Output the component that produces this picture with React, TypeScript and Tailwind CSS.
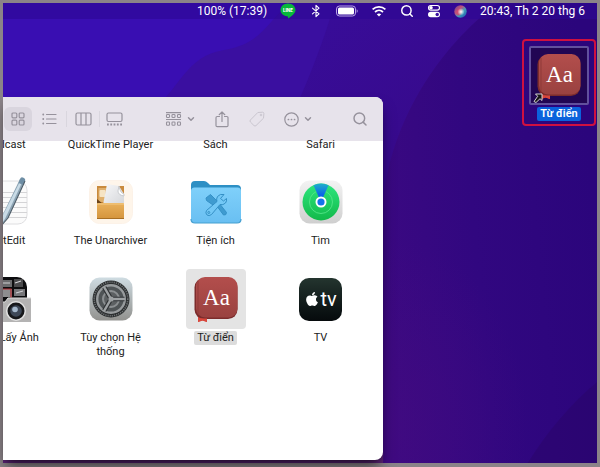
import React from 'react';
import clsx from 'clsx';
import { FaApple } from 'react-icons/fa';
import { ChevronDown, Search } from 'lucide-react';

interface AppItem {
  name: string;
  icon?: React.FC;
  selected?: boolean;
}

const Wallpaper = () => (
  <svg className="absolute inset-0 -z-10 h-full w-full" viewBox="0 0 600 467" preserveAspectRatio="none" aria-hidden="true">
    <defs>
      <linearGradient id="wpBase" x1="0" y1="0" x2="1" y2="1">
        <stop offset="0" stopColor="#390fa8" />
        <stop offset="0.5" stopColor="#370a8c" />
        <stop offset="1" stopColor="#2a046c" />
      </linearGradient>
      <linearGradient id="wpRight" x1="0" y1="0.7" x2="1" y2="0.5">
        <stop offset="0" stopColor="#3b0982" />
        <stop offset="0.45" stopColor="#310780" />
        <stop offset="1" stopColor="#2b057c" />
      </linearGradient>
      <radialGradient id="wpGlow">
        <stop offset="0" stopColor="#420b80" />
        <stop offset="1" stopColor="#420b80" stopOpacity="0" />
      </radialGradient>
    </defs>
    <rect width="600" height="467" fill="url(#wpBase)" />
    <path d="M0 0H335C325 35 312 70 294 110H0Z" fill="#3a0fa0" />
    <path d="M0 0H290C265 20 262 42 222 48C185 54 178 88 148 112H0Z" fill="#390eb2" />
    <path d="M500 0C440 45 392 120 384 200V467H600V0Z" fill="url(#wpRight)" />
    <ellipse cx="390" cy="430" rx="140" ry="190" fill="url(#wpGlow)" opacity="0.7" />
    <path d="M600 385C575 405 550 435 530 467H600Z" fill="#27055f" opacity="0.35" />
    <rect y="455" width="384" height="12" fill="#5d2478" />
  </svg>
);

const LineIcon = () => (
  <svg width="16" height="16" viewBox="0 0 16 16">
    <path d="M8 .5C12.2.5 15.500 3.300 15.500 7C15.500 10.300 11.500 13.300 8 15.500C8.300 14 8 13.400 7 13.300C3.300 12.900.5 10.300.5 7C.5 3.300 3.800.5 8 .5Z" fill="#08b83a" />
    <text x="8" y="8.500" textAnchor="middle" fontSize="4.500" fontWeight="800" fill="#fff" fontFamily="Inter, sans-serif">LINE</text>
  </svg>
);

const BluetoothIcon = () => (
  <svg width="14" height="14" viewBox="0 0 14 14" fill="none" stroke="#fff" strokeWidth="1.100" strokeLinejoin="round" strokeLinecap="round">
    <path d="M3.500 4.200L10 9.800L7 12.700V1.300L10 4.200L3.500 9.800" />
  </svg>
);

const BatteryIcon = () => (
  <svg width="22" height="12" viewBox="0 0 22 12">
    <rect x=".5" y="1" width="19" height="10" rx="3" fill="none" stroke="#b9a5e6" />
    <rect x="2" y="2.500" width="16" height="7" rx="1.500" fill="#fff" />
    <path d="M20.700 4.200C22 4.700 22 7.300 20.700 7.800Z" fill="#b9a5e6" />
  </svg>
);

const WifiIcon = () => (
  <svg width="16" height="12" viewBox="0 0 16 12" fill="none" stroke="#fff" strokeWidth="1.700">
    <path d="M1.600 4.400C5.200.9 10.800.9 14.400 4.400" />
    <path d="M4 7C6.300 4.900 9.700 4.900 12 7" />
    <path d="M8 11.500L5.800 9.200C7.100 8.200 8.900 8.200 10.200 9.200Z" fill="#fff" stroke="none" />
  </svg>
);

const ControlCenterIcon = () => (
  <svg width="14" height="14" viewBox="0 0 14 14">
    <rect x="1.500" y="1.500" width="11" height="4.600" rx="2.300" fill="none" stroke="#fff" strokeWidth="1.100" />
    <circle cx="4" cy="3.800" r="1.800" fill="#fff" />
    <rect x="1" y="7.700" width="12" height="5.500" rx="2.750" fill="#fff" />
    <circle cx="10.200" cy="10.450" r="1.700" fill="#3a10a0" />
  </svg>
);

const SiriIcon = () => (
  <svg width="13" height="13" viewBox="0 0 13 13">
    <defs>
      <radialGradient id="siriCore">
        <stop offset="0" stopColor="#fff" />
        <stop offset="1" stopColor="#fff" stopOpacity="0" />
      </radialGradient>
      <linearGradient id="siriRing" x1="0" y1="0" x2="1" y2="1">
        <stop offset="0" stopColor="#5c4b8e" />
        <stop offset="0.35" stopColor="#c14f7c" />
        <stop offset="0.6" stopColor="#3f9fb8" />
        <stop offset="1" stopColor="#1d4fb0" />
      </linearGradient>
    </defs>
    <circle cx="6.500" cy="6.500" r="6.200" fill="url(#siriRing)" />
    <path d="M2 8.500C3 3.500 7 3 8 6.500C7 11 4 12 2 8.500Z" fill="#e04668" opacity="0.7" />
    <circle cx="7" cy="6.800" r="3.600" fill="url(#siriCore)" />
  </svg>
);

const GridIcon = () => (
  <svg width="14" height="14" viewBox="0 0 14 14" fill="none" stroke="currentColor" strokeWidth="1.200">
    <rect x="1" y="1" width="4.800" height="4.800" rx="1" />
    <rect x="8.200" y="1" width="4.800" height="4.800" rx="1" />
    <rect x="1" y="8.200" width="4.800" height="4.800" rx="1" />
    <rect x="8.200" y="8.200" width="4.800" height="4.800" rx="1" />
  </svg>
);

const ListIcon = () => (
  <svg width="15" height="12" viewBox="0 0 15 12" fill="none" stroke="currentColor" strokeWidth="1.200" strokeLinecap="round">
    <path d="M4.500 1.500H14M4.500 6H14M4.500 10.500H14" />
    <path d="M1.200 1.500H1.300M1.200 6H1.300M1.200 10.500H1.300" strokeWidth="1.800" />
  </svg>
);

const ColumnsIcon = () => (
  <svg width="17" height="14" viewBox="0 0 17 14" fill="none" stroke="currentColor" strokeWidth="1.200">
    <rect x="1" y="1" width="15" height="12" rx="1.500" />
    <path d="M6 1V13M11 1V13" />
  </svg>
);

const GalleryIcon = () => (
  <svg width="17" height="14" viewBox="0 0 17 14" fill="none" stroke="currentColor" strokeWidth="1.200">
    <rect x="1" y="1" width="15" height="8.500" rx="1.500" />
    <path d="M1 12.500H16" strokeWidth="1.800" strokeDasharray="1.800 1.500" />
  </svg>
);

const GroupIcon = () => (
  <svg width="17" height="15" viewBox="0 0 17 15" fill="none" stroke="currentColor" strokeWidth="1.100">
    <path d="M1 .6H16M1 7.500H16" />
    {[1.500, 7, 12.500].map((x) => (
      <React.Fragment key={x}>
        <rect x={x} y="2.500" width="3" height="3" rx=".8" />
        <rect x={x} y="10" width="3" height="3.200" rx=".8" />
      </React.Fragment>
    ))}
  </svg>
);

const ShareIcon = () => (
  <svg width="14" height="17" viewBox="0 0 14 17" fill="none" stroke="currentColor" strokeWidth="1.200" strokeLinecap="round" strokeLinejoin="round">
    <path d="M4.500 5.500H2.200Q1 5.500 1 6.700V14.500Q1 15.700 2.200 15.700H11.800Q13 15.700 13 14.500V6.700Q13 5.500 11.800 5.500H9.500" />
    <path d="M7 10.500V1M4.200 3.700L7 1L9.800 3.700" />
  </svg>
);

const TagIcon = () => (
  <svg width="16" height="16" viewBox="0 0 16 16" fill="none" stroke="currentColor" strokeLinejoin="round">
    <path d="M8.800 1.500L13.500 1.200Q14.900 1.200 14.900 2.600L14.500 7.200L7 14.600Q6 15.500 5 14.600L1.400 11Q.5 10 1.400 9Z" />
    <circle cx="12" cy="4" r=".8" />
  </svg>
);

const MoreIcon = () => (
  <svg width="15" height="15" viewBox="0 0 15 15" fill="none" stroke="currentColor" strokeWidth="1.200">
    <circle cx="7.500" cy="7.500" r="6.700" />
    <path d="M4.400 7.500H4.500M7.450 7.500H7.550M10.500 7.500H10.600" strokeWidth="1.700" strokeLinecap="round" />
  </svg>
);

const TextEditIcon = () => (
  <svg width="48" height="50" viewBox="0 0 48 50">
    <rect x="2" y="4" width="43" height="43" rx="9" fill="#fbfbfb" stroke="#dedee0" />
    <path d="M2 15.500H45M2 20.500H45M2 25.500H45M2 30.500H45M2 35.500H45M2 40.500H45" stroke="#d4d4d6" />
    <path d="M38 2L43 4L26 41L19 49L20.500 38Z" fill="#8ca3b3" />
    <path d="M39 2.500L41 3.500L23 42L20 46L21 38Z" fill="#c9dbe6" />
    <path d="M38 2Q39 -.5 41.500.8Q44 2 43 4L41.500 8L36.500 6Z" fill="#6e8ea5" />
    <path d="M43 4L26 41L19 49" fill="none" stroke="#4f5d68" strokeWidth="1.100" />
  </svg>
);

const UnarchiverIcon = () => (
  <svg width="44" height="44" viewBox="0 0 44 44">
    <defs>
      <linearGradient id="boxFront" x1="0" y1="0" x2="0" y2="1">
        <stop offset="0" stopColor="#e9b15c" />
        <stop offset="1" stopColor="#d4943c" />
      </linearGradient>
      <linearGradient id="sheet" x1="0" y1="0" x2="1" y2="1">
        <stop offset="0" stopColor="#f8f8f9" />
        <stop offset="1" stopColor="#d4d6da" />
      </linearGradient>
    </defs>
    <rect x=".5" y=".5" width="43" height="43" rx="10" fill="#fef5ea" stroke="#fcf2e8" />
    <rect x="8" y="6" width="27" height="19" fill="#c98a3c" />
    <rect x="9.500" y="8" width="8" height="14" fill="#e0b06c" />
    <rect x="10.500" y="10" width="6" height="7" rx="1" fill="#f6e4c4" />
    <path d="M8 19L14 24H8Z" fill="#6b4318" />
    <path d="M18 4L30 6L35 14V25H14Z" fill="url(#sheet)" />
    <path d="M30 6Q31 13 35 14V16Q29 15 29 11Z" fill="#fff" stroke="#b9bbc0" strokeWidth=".7" />
    <rect x="8" y="23" width="27" height="16" rx="1" fill="url(#boxFront)" />
    <path d="M8 24H35" stroke="#f5cb85" />
    <path d="M8 38.500H35" stroke="#a86f24" />
  </svg>
);

const UtilitiesIcon = () => (
  <svg width="52" height="44" viewBox="0 0 52 44">
    <defs>
      <linearGradient id="folderFront" x1="0" y1="0" x2="0" y2="1">
        <stop offset="0" stopColor="#7fd0fa" />
        <stop offset="1" stopColor="#69bff2" />
      </linearGradient>
    </defs>
    <path d="M1 5Q1 1 5 1H14Q16 1 18 3L20 5H47Q51 5 51 9V20H1Z" fill="#2d8fc4" />
    <path d="M1 11Q1 7.500 4.500 7.500H47.500Q51 7.500 51 11V39Q51 43 47 43H5Q1 43 1 39Z" fill="url(#folderFront)" />
    <path d="M1 39Q1 43 5 43H47Q51 43 51 39" fill="none" stroke="#459fd0" strokeWidth="1.200" />
    <g fill="none" stroke="#3490c6" strokeWidth="1" strokeLinejoin="round">
      <path d="M16 18L20.500 14.500L28 22L24.500 26L16.500 20.500Z" fill="#3f9bd0" />
      <path d="M26.500 25.500L29 23L36.500 32.500Q36.500 35.500 33.500 35Z" fill="#3f9bd0" />
      <path d="M34 14.500Q30 13.500 27.500 16.500Q26 19 27 21.500L16.500 30.500Q15 33 17 35Q19 36.500 21.500 34.500L30 24.500Q33 25.500 35.500 23Q37 21 36.500 18.500L33.500 21L30.500 18.500Z" fill="#73c8f6" />
      <circle cx="18.800" cy="32.500" r="1" />
    </g>
  </svg>
);

const FindMyIcon = () => (
  <svg width="44" height="44" viewBox="0 0 44 44">
    <defs>
      <linearGradient id="findBase" x1="0" y1="0" x2="0" y2="1">
        <stop offset="0" stopColor="#f3f3f3" />
        <stop offset="1" stopColor="#cfcfcf" />
      </linearGradient>
      <linearGradient id="findGreen" x1="0" y1="0" x2="0" y2="1">
        <stop offset="0" stopColor="#2ee67e" />
        <stop offset="1" stopColor="#12b94a" />
      </linearGradient>
      <linearGradient id="findBeam" x1="0" y1="0" x2="0" y2="1">
        <stop offset="0" stopColor="#1fb0c8" />
        <stop offset="0.6" stopColor="#0b67e8" />
      </linearGradient>
    </defs>
    <rect x=".5" y=".5" width="43" height="43" rx="10" fill="url(#findBase)" />
    <circle cx="22" cy="22" r="18.500" fill="url(#findGreen)" />
    <circle cx="22" cy="22" r="11.500" fill="none" stroke="#5be88d" strokeWidth=".8" />
    <path d="M22 22L14.500 5.200Q22 1.800 29.500 5.200Z" fill="url(#findBeam)" />
    <circle cx="22" cy="22" r="5.500" fill="#fff" />
    <circle cx="22" cy="22" r="3.600" fill="#1573ea" />
  </svg>
);

const ImageCaptureIcon = () => (
  <svg width="52" height="46" viewBox="0 0 52 46">
    <rect x="4" y="1" width="43" height="43" rx="10" fill="#0d0d0f" />
    <rect x="6" y="4" width="26" height="7" fill="#6b6b6d" />
    <rect x="6" y="13" width="26" height="8" fill="#8d8d8f" />
    <path d="M20 13H31V22" fill="none" stroke="#b02a30" strokeWidth="1.200" />
    <rect x="34" y="3" width="9" height="8" fill="#4a4a4c" />
    <rect x="34" y="13" width="11" height="7" fill="#77777a" />
    <path d="M8 6H18M22 7H30M10 16H17M35 7L41 5M36 17L43 15" stroke="#cfcfd2" strokeWidth="1.200" />
    <path d="M4 26H25L28 22H51V46H4Z" fill="#b4b3b3" />
    <path d="M4 26H25L28 22H51" fill="none" stroke="#dcdcdc" />
    <circle cx="36" cy="35" r="10" fill="#e3e3e3" />
    <circle cx="36" cy="35" r="8.500" fill="#17181b" />
    <circle cx="36" cy="35" r="5.800" fill="#3e4858" />
    <circle cx="35" cy="33.500" r="2.800" fill="#a5b8cc" />
  </svg>
);

const SettingsIcon = () => (
  <svg width="44" height="44" viewBox="0 0 44 44">
    <defs>
      <linearGradient id="settingsBase" x1="0" y1="0" x2="0" y2="1">
        <stop offset="0" stopColor="#cfdce2" />
        <stop offset="1" stopColor="#92928f" />
      </linearGradient>
    </defs>
    <rect x=".5" y=".5" width="43" height="43" rx="10" fill="url(#settingsBase)" />
    <circle cx="22" cy="22" r="18.500" fill="#2b2e2f" />
    <circle cx="22" cy="22" r="16.800" fill="none" stroke="#6d7173" strokeWidth="1.600" strokeDasharray="1.200 1" />
    <circle cx="22" cy="22" r="13.800" fill="#4f5456" stroke="#979b9d" strokeWidth="2.400" />
    <circle cx="22" cy="22" r="8" fill="#5c6062" stroke="#8b8f91" strokeWidth="2" />
    <path d="M22 22H35.500M22 22L15.300 10.300M22 22L15.300 33.700" stroke="#2f3234" strokeWidth="4.600" />
    <path d="M22 22H36M22 22L15 9.900M22 22L15 34.100" stroke="#9da1a3" strokeWidth="2.400" />
    <circle cx="22" cy="22" r="2.600" fill="#9da1a3" />
  </svg>
);

const DictionaryIcon = () => (
  <svg width="44" height="46" viewBox="0 0 44 46">
    <defs>
      <linearGradient id="bookCover" x1="0" y1="0" x2="0" y2="1">
        <stop offset="0" stopColor="#b34e4c" />
        <stop offset="1" stopColor="#9a4240" />
      </linearGradient>
    </defs>
    <path d="M4 38H13V46L8.500 44.500L4 46Z" fill="#d8473c" />
    <rect x=".5" y="2" width="43" height="41" rx="9.500" fill="#7c2c2c" />
    <rect x="2" y="1" width="41.500" height="40.500" rx="9" fill="url(#bookCover)" />
    <path d="M4 5V38" stroke="#8f3a39" />
    <path d="M4 42.500H13V46L8.500 44.500L4 46Z" fill="#d8473c" />
    <text x="22.500" y="29" textAnchor="middle" fontSize="23" fill="#fff" fontFamily="'Liberation Serif', serif">Aa</text>
  </svg>
);

const TvIcon = () => (
  <div className="flex h-[43px] w-[43px] items-center justify-center rounded-[10px] bg-linear-to-b from-[#24352f] to-[#060a0c] text-white">
    <FaApple size={16} />
    <span className="text-xl leading-5">tv</span>
  </div>
);

const AliasArrow = () => (
  <svg className="absolute bottom-0 left-0.5" width="10" height="10" viewBox="0 0 10 10">
    <path d="M2.500 1H9V7.500L7 5.700L3 9.500L1 8.500L4.700 3.300Z" fill="#141414" stroke="#e8e8e8" strokeWidth=".9" />
  </svg>
);

const statusIcons = [
  { label: 'LINE', icon: LineIcon },
  { label: 'Bluetooth', icon: BluetoothIcon },
  { label: 'Pin', icon: BatteryIcon },
  { label: 'Wi-Fi', icon: WifiIcon },
  { label: 'Spotlight', icon: () => <Search size={14} strokeWidth={2.5} /> },
  { label: 'Control Center', icon: ControlCenterIcon },
  { label: 'Siri', icon: SiriIcon }
];

const viewModes = [
  { label: 'Icons', icon: GridIcon, style: 'w-7 rounded-md bg-[#d9d5de]' },
  { label: 'List', icon: ListIcon, style: 'w-[34px]' },
  { label: 'Columns', icon: ColumnsIcon, style: 'w-8', divider: true },
  { label: 'Gallery', icon: GalleryIcon, style: 'w-[29px]', divider: true }
];

const hiddenRow = ['Podcast', 'QuickTime Player', 'Sách', 'Safari'];

const apps: AppItem[] = [
  { name: 'TextEdit', icon: TextEditIcon },
  { name: 'The Unarchiver', icon: UnarchiverIcon },
  { name: 'Tiện ích', icon: UtilitiesIcon },
  { name: 'Tìm', icon: FindMyIcon },
  { name: 'Trình Lấy Ảnh', icon: ImageCaptureIcon },
  { name: 'Tùy chọn Hệ thống', icon: SettingsIcon },
  { name: 'Từ điển', icon: DictionaryIcon, selected: true },
  { name: 'TV', icon: TvIcon }
];

const MenuBar = () => (
  <header className="flex h-4 items-center justify-end gap-[13px] bg-[#2d0795]/60 pr-3 text-xs leading-4 text-white">
    <span>100% (17:39)</span>
    {statusIcons.map(({ label, icon: Icon }) => (
      <button key={label} aria-label={label} className="shrink-0">
        <Icon />
      </button>
    ))}
    <time className="whitespace-nowrap">20:43, Th 2 20 thg 6</time>
  </header>
);

const Toolbar = () => (
  <div className="flex h-11 shrink-0 items-center bg-[#e7e3eb] pr-[15px] pl-px text-[#96929c]">
    <div className="flex items-center">
      {viewModes.map(({ label, icon: Icon, style, divider }) => (
        <React.Fragment key={label}>
          {divider && <span className="h-4 w-px bg-[#d9d6de]" />}
          <button aria-label={label} className={clsx('flex h-6 items-center justify-center', style)}>
            <Icon />
          </button>
        </React.Fragment>
      ))}
    </div>
    <div className="ml-9 flex flex-1 items-center justify-between">
      <button aria-label="Group" className="flex items-center gap-1">
        <GroupIcon />
        <ChevronDown size={10} strokeWidth={3.5} />
      </button>
      <button aria-label="Share">
        <ShareIcon />
      </button>
      <button aria-label="Tags" className="text-[#c9c5ce]">
        <TagIcon />
      </button>
      <button aria-label="More" className="flex items-center gap-1">
        <MoreIcon />
        <ChevronDown size={10} strokeWidth={3.5} />
      </button>
      <button aria-label="Search" className="ml-5">
        <Search size={16} strokeWidth={2.2} />
      </button>
    </div>
  </div>
);

const FinderItem = ({ name, icon: Icon, selected }: AppItem) => (
  <button className="flex h-[97px] flex-col items-center gap-0.5">
    <span className={clsx('flex h-[60px] w-[60px] shrink-0 items-center justify-center rounded', selected && 'bg-[#e4e4e4]')}>
      {Icon && <Icon />}
    </span>
    <span className={clsx('max-w-[84px] rounded-xs px-[3px]', selected && 'bg-[#dcdcdc]')}>{name}</span>
  </button>
);

const FinderWindow = () => (
  <section className="mt-[78px] mb-[3px] flex min-w-0 flex-1 flex-col overflow-hidden rounded-r-lg bg-white shadow-lg shadow-black/50">
    <Toolbar />
    <div className="flex flex-1 justify-end pr-2.5">
      <div className="-mt-[3px] w-[420px] shrink-0 text-[11px] leading-[14px] text-[#222]">
        <div className="mb-5 grid grid-cols-4 text-center">
          {hiddenRow.map((name) => (
            <span key={name}>{name}</span>
          ))}
        </div>
        <div className="grid grid-cols-4">
          {apps.map((app) => (
            <FinderItem key={app.name} {...app} />
          ))}
        </div>
      </div>
    </div>
  </section>
);

export default function App() {
  return (
    <div className="relative isolate flex min-h-screen flex-col border-[3px] border-b-4 border-[#8b8388] font-[Roboto,'Liberation_Sans',sans-serif]">
      <Wallpaper />
      <MenuBar />
      <main className="flex flex-1">
        <FinderWindow />
        <aside className="flex w-[214px] shrink-0 items-start justify-end pt-5 pr-px">
          <button className="flex flex-col items-center gap-0.5 rounded border-2 border-[#cf1040] p-[5px] pb-[3px]">
            <span className="relative flex h-[59px] w-[60px] items-center justify-center rounded-xs border-2 border-[#61509d] bg-[#210653]">
              <DictionaryIcon />
              <AliasArrow />
            </span>
            <span className="rounded-xs bg-[#0b62dc] px-[3px] text-[11px] leading-[14px] font-semibold text-white">Từ điển</span>
          </button>
        </aside>
      </main>
    </div>
  );
}
